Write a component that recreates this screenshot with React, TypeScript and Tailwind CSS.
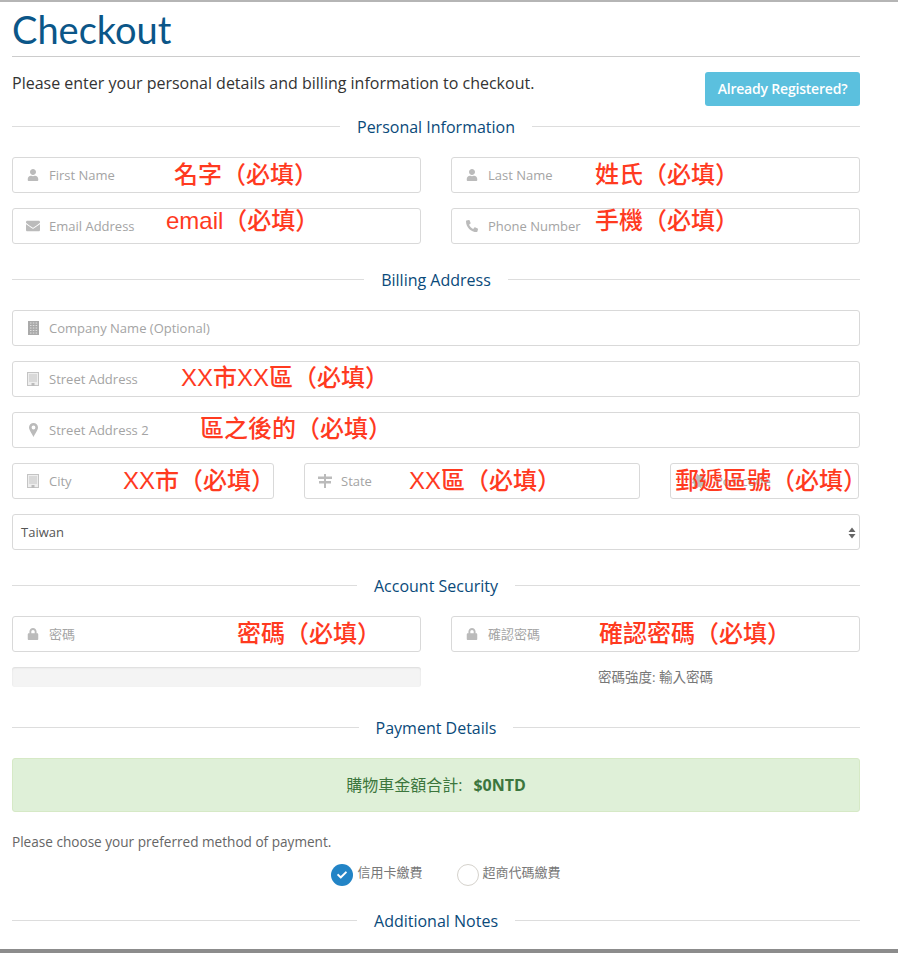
import type { ReactNode } from "react";
import { FaUser, FaEnvelope, FaPhone, FaLock, FaCertificate, FaCheck } from "react-icons/fa";

const FONT = "font-['Open_Sans','Noto_Sans_CJK_TC',sans-serif]";

function CompanyIcon() {
  return (
    <svg width="11" height="14" viewBox="0 0 11 14">
      <rect width="11" height="14" fill="#aaaaaa" />
      <path d="M2 2h1.5M4.8 2h1.5M7.6 2h1.5M2 4.5h1.5M4.8 4.5h1.5M7.6 4.5h1.5M2 7h1.5M4.8 7h1.5M7.6 7h1.5M2 9.5h1.5M4.8 9.5h1.5M7.6 9.5h1.5M2 12h1.5M4.8 12h1.5M7.6 12h1.5" stroke="#dddddd" strokeWidth="1" />
    </svg>
  );
}

function StreetIcon() {
  return (
    <svg width="12" height="14" viewBox="0 0 12 14">
      <rect x="0.5" y="0.5" width="11" height="13" fill="#eeeeee" stroke="#c4c4c4" />
      <path d="M2 3h8M2 5h8M2 7h8M2 9h8" stroke="#c4c4c4" strokeWidth="1" />
      <rect x="4.5" y="11" width="3" height="3" fill="#bbbbbb" />
    </svg>
  );
}

function MarkerIcon() {
  return (
    <svg width="9" height="14" viewBox="0 0 9 14">
      <path
        fillRule="evenodd"
        d="M4.5 0A4.5 4.5 0 0 0 0 4.5C0 7 3 11 4.5 14 6 11 9 7 9 4.5A4.5 4.5 0 0 0 4.5 0ZM4.5 2.6a1.9 1.9 0 1 1 0 3.8 1.9 1.9 0 0 1 0-3.8Z"
        fill="#bbbbbb"
      />
    </svg>
  );
}

function SignIcon() {
  return (
    <svg width="14" height="14" viewBox="0 0 14 14" fill="#bbbbbb">
      <rect x="6" y="0" width="2" height="14" />
      <rect x="0" y="2.5" width="14" height="2.5" />
      <rect x="1" y="7" width="12" height="2.5" />
    </svg>
  );
}

// red notes written over the form
function Note({ className, children }: { className: string; children: ReactNode }) {
  return (
    <span
      className={`absolute z-10 whitespace-nowrap font-['Liberation_Sans','Noto_Sans_CJK_TC',sans-serif] text-[24px] leading-[30px] font-medium text-[#ff3a1f] ${className}`}
    >
      {children}
    </span>
  );
}

function SectionTitle({ title, className = "" }: { title: string; className?: string }) {
  return (
    <div className={`flex h-6 items-center gap-[17px] ${className}`}>
      <div className="mb-px h-px flex-1 bg-[#dddddd]" />
      <span className="text-[16px] leading-6 text-[#0a4a7a]">{title}</span>
      <div className="mb-px h-px flex-1 bg-[#dddddd]" />
    </div>
  );
}

function Field({
  icon,
  label,
  className = "",
  children,
}: {
  icon?: ReactNode;
  label: string;
  className?: string;
  children?: ReactNode;
}) {
  return (
    <div
      className={`relative flex h-9 items-center rounded-[3px] border border-[#d9d9d9] bg-white text-[#a4a4a4] ${className}`}
    >
      <span className="flex w-9 shrink-0 justify-center pl-1 text-[#bbbbbb]">{icon}</span>
      <span className="pt-0.5 text-[13px]">{label}</span>
      {children}
    </div>
  );
}

export default function App() {
  return (
    <div className={`flex h-[953px] w-[898px] flex-col overflow-hidden bg-white ${FONT}`}>
      <div className="h-0.5 bg-[#b5b5b5]" />
      <main className="flex-1 pr-[38px] pl-3">
        <h1 className="h-[55px] border-b border-[#cccccc] font-['Lato',sans-serif] text-[38px] leading-[55px] text-[#0b5688]">
          Checkout
        </h1>

        <div className="mt-[15px] flex items-start justify-between">
          <p className="text-[16px] leading-[22px] text-[#333333]">
            Please enter your personal details and billing information to checkout.
          </p>
          <button className="h-[34px] w-[155px] rounded-[3px] bg-[#5bc0de] pb-0.5 text-[14px] font-semibold tracking-[-0.2px] text-white">
            Already Registered?
          </button>
        </div>

        <SectionTitle title="Personal Information" className="mt-[9px]" />

        <div className="mt-[18px] grid grid-cols-2 gap-x-[30px] gap-y-[15px]">
          <Field icon={<FaUser className="h-3 w-3" />} label="First Name">
            <Note className="top-[2px] left-[161px]">名字（必填）</Note>
          </Field>
          <Field icon={<FaUser className="h-3 w-3" />} label="Last Name">
            <Note className="top-[2px] left-[143px]">姓氏（必填）</Note>
          </Field>
          <Field icon={<FaEnvelope className="h-[14px] w-[14px]" />} label="Email Address">
            <Note className="top-[-3px] left-[153px]">email（必填）</Note>
          </Field>
          <Field icon={<FaPhone className="h-3 w-3 -scale-x-100" />} label="Phone Number">
            <Note className="top-[-3px] left-[143px]">手機（必填）</Note>
          </Field>
        </div>

        <SectionTitle title="Billing Address" className="mt-6" />

        <div className="mt-[18px] flex flex-col gap-[15px]">
          <Field icon={<CompanyIcon />} label="Company Name (Optional)" />
          <Field icon={<StreetIcon />} label="Street Address">
            <Note className="top-px left-[168px]">XX市XX區（必填）</Note>
          </Field>
          <Field icon={<MarkerIcon />} label="Street Address 2">
            <Note className="top-px left-[187px]">區之後的（必填）</Note>
          </Field>
          <div className="flex gap-[30px]">
            <Field icon={<StreetIcon />} label="City" className="w-[262px]">
              <Note className="top-[2px] left-[110px]">XX市（必填）</Note>
            </Field>
            <Field icon={<SignIcon />} label="State" className="w-[336px]">
              <Note className="top-[2px] left-[104px]">XX區（必填）</Note>
            </Field>
            <Field icon={<FaCertificate className="h-[14px] w-[14px]" />} label="Postcode" className="w-[189px] pl-2">
              <Note className="top-[2px] left-[4px]">郵遞區號（必填）</Note>
            </Field>
          </div>
          <div className="relative flex h-9 items-center rounded-[3px] border border-[#d9d9d9] pt-0.5 pl-2 text-[13px] text-[#555555]">
            Taiwan
            <svg className="absolute top-[12px] right-[3px]" width="8" height="12" viewBox="0 0 8 12" fill="#666666">
              <path d="M4 0.5 7.5 5H0.5zM0.5 7H7.5L4 11.5z" />
            </svg>
          </div>
        </div>

        <SectionTitle title="Account Security" className="mt-6" />

        <div className="mt-[18px] grid grid-cols-2 gap-x-[30px] gap-y-[15px]">
          <Field icon={<FaLock className="h-3 w-3" />} label="密碼">
            <Note className="top-[2px] left-[224px]">密碼（必填）</Note>
          </Field>
          <Field icon={<FaLock className="h-3 w-3" />} label="確認密碼">
            <Note className="top-[2px] left-[147px]">確認密碼（必填）</Note>
          </Field>
          <div className="h-5 rounded-[3px] bg-[#f4f4f4] shadow-[inset_0_1px_2px_rgba(0,0,0,0.1)]" />
          <p className="text-center text-[13.5px] leading-5 text-[#777777]">密碼強度: 輸入密碼</p>
        </div>

        <SectionTitle title="Payment Details" className="mt-[29px]" />

        <div className="mt-[18px] flex h-[54px] items-center justify-center gap-[11px] rounded-[3px] border border-[#d6e9c6] bg-[#dff0d8] text-[16px] text-[#3c763d]">
          <span>購物車金額合計:</span>
          <strong className="font-bold">$0NTD</strong>
        </div>

        <p className="mt-5 text-[13.6px] leading-5 text-[#666666]">Please choose your preferred method of payment.</p>

        <div className="mt-[9px] flex h-[24px] items-center justify-center gap-[34px] pl-5 text-[13px] text-[#777777]">
          <label className="flex items-center gap-1">
            <span className="mt-[3px] flex h-[22px] w-[22px] items-center justify-center rounded-full bg-[#2284c6]">
              <FaCheck className="h-[10px] w-[10px] text-white" />
            </span>
            信用卡繳費
          </label>
          <label className="flex items-center gap-1">
            <span className="mt-[3px] h-[22px] w-[22px] rounded-full border border-[#d5d2cc] bg-white" />
            超商代碼繳費
          </label>
        </div>

        <SectionTitle title="Additional Notes" className="mt-6" />
      </main>
      <div className="h-1 bg-[#8c8c8c]" />
    </div>
  );
}
